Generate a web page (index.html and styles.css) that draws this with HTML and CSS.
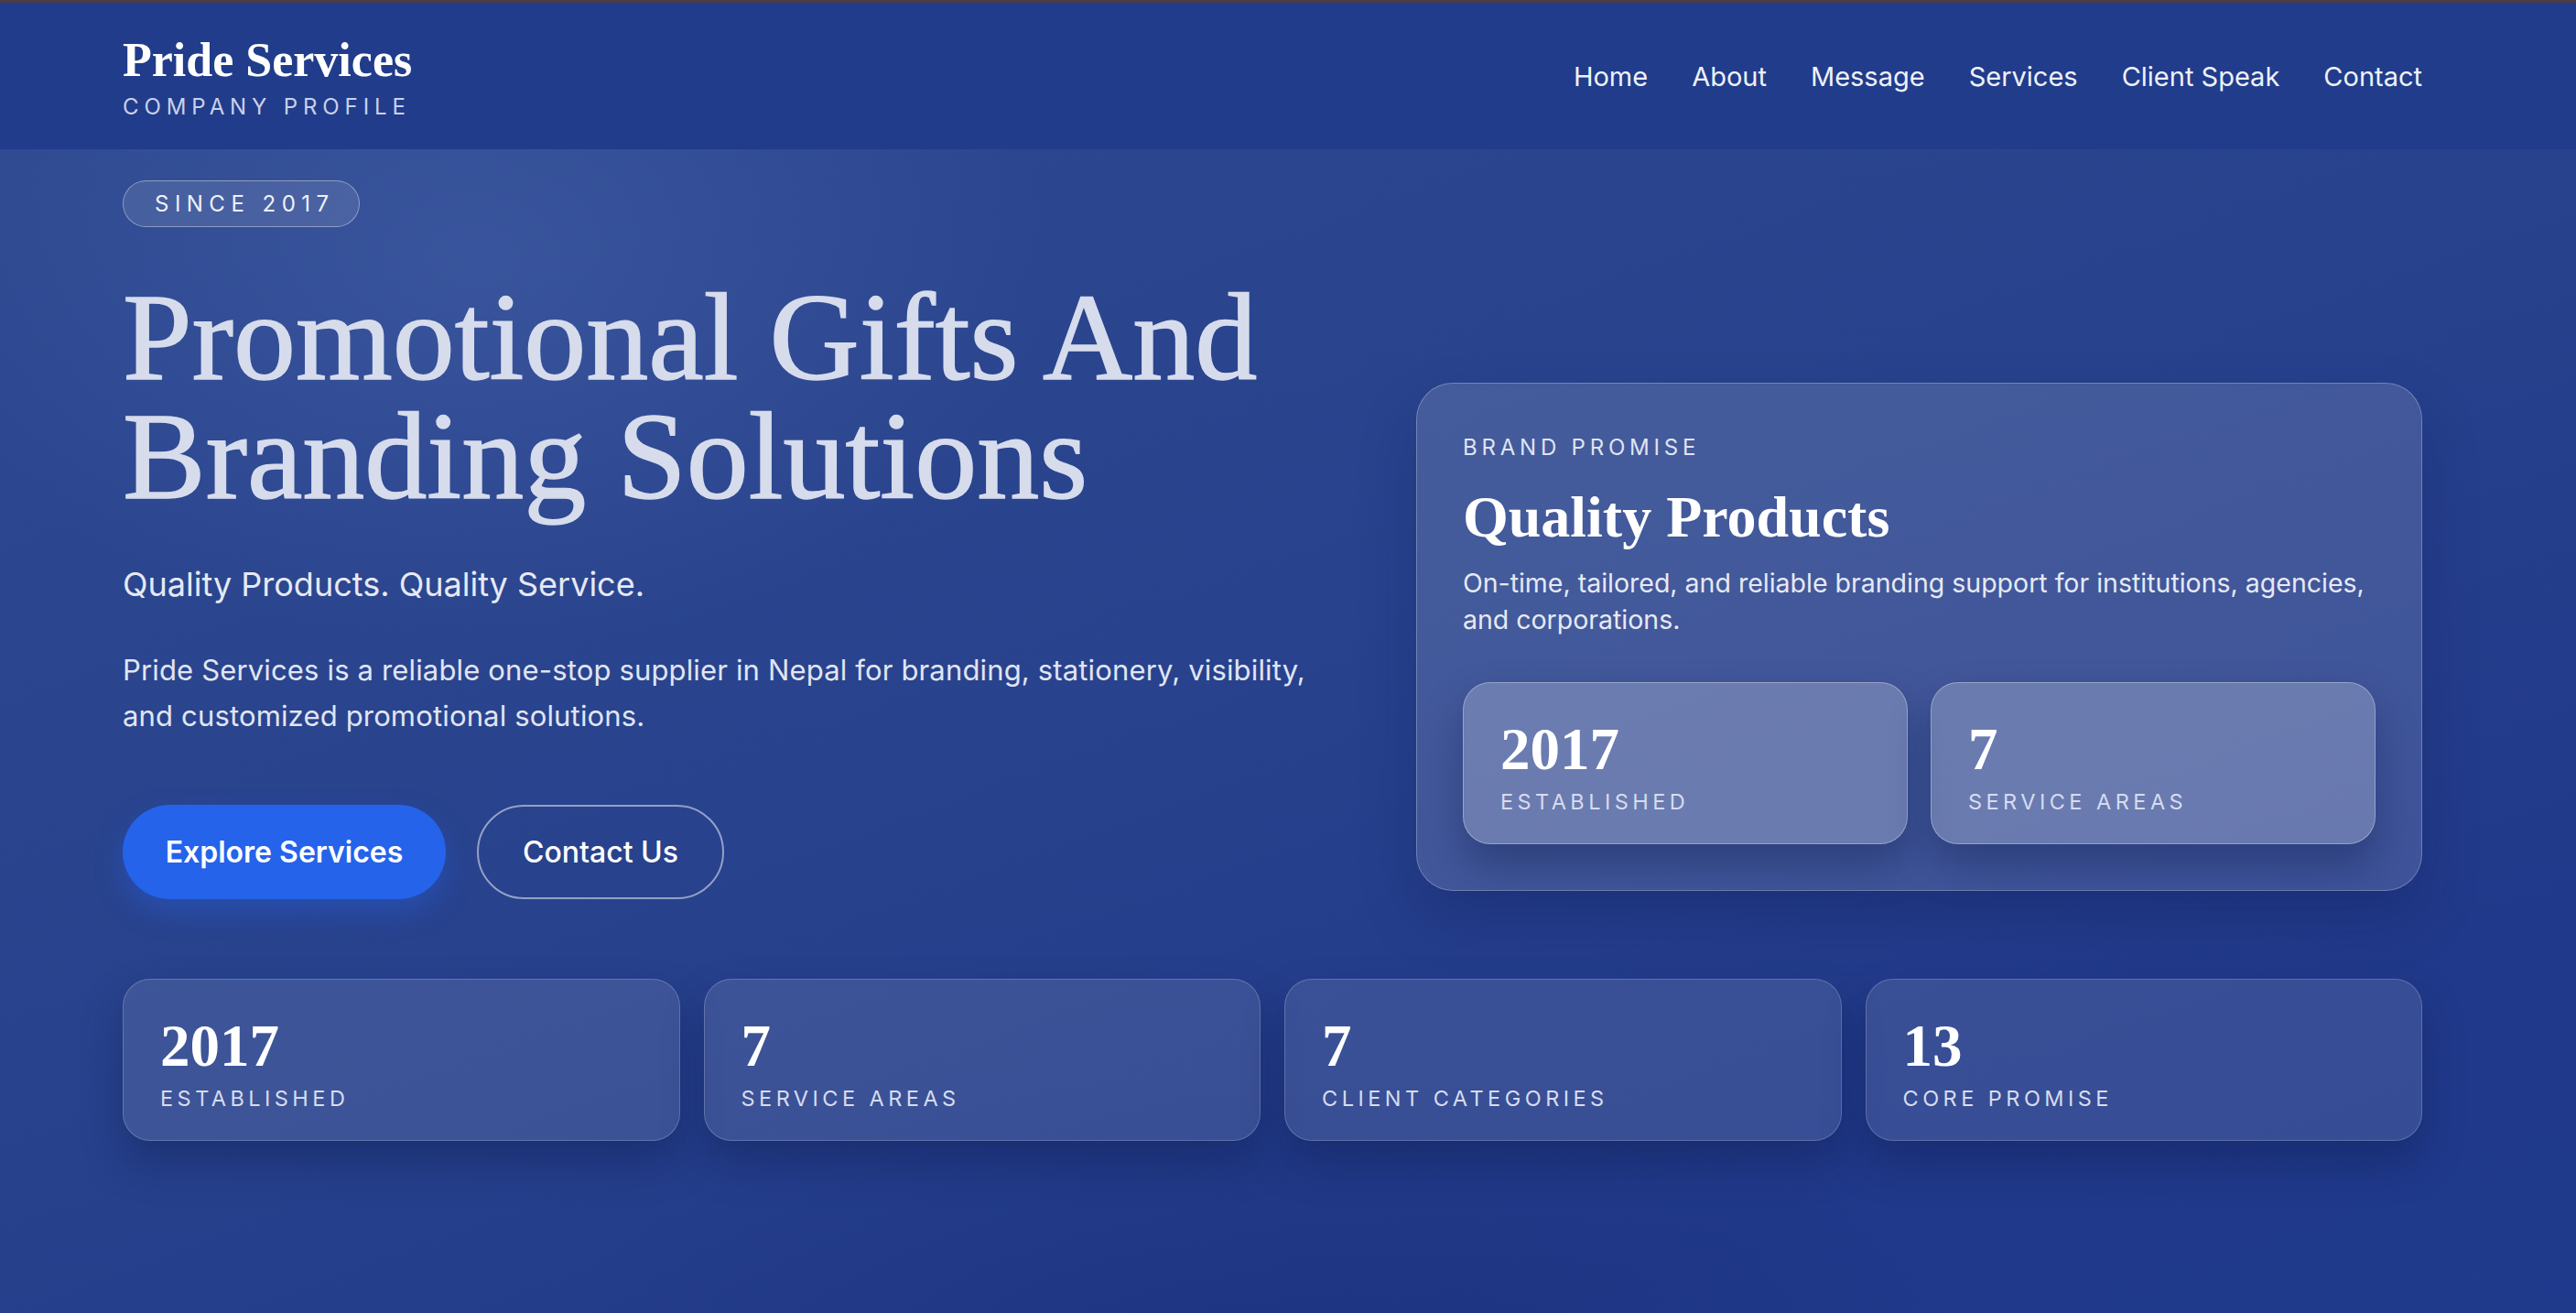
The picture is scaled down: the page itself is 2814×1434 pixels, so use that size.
FILE: index.html
```html
<!DOCTYPE html>
<html lang="en">
<head>
  <meta charset="UTF-8">
  <meta name="viewport" content="width=device-width, initial-scale=1">
  <title>Pride Services | Company Profile</title>
  <link rel="stylesheet" href="styles.css">
</head>
<body>
  <header class="site-header">
    <div class="container header-inner">
      <a class="brand" href="#">
        <span class="brand-name">Pride Services</span>
        <span class="brand-sub">Company Profile</span>
      </a>
      <nav class="nav">
        <a href="#">Home</a>
        <a href="#">About</a>
        <a href="#">Message</a>
        <a href="#">Services</a>
        <a href="#">Client Speak</a>
        <a href="#">Contact</a>
      </nav>
    </div>
  </header>

  <main class="hero">
    <div class="container">
      <div class="hero-grid">
        <div class="hero-copy">
          <span class="pill">Since 2017</span>
          <h1>Promotional Gifts And Branding Solutions</h1>
          <p class="tagline">Quality Products. Quality Service.</p>
          <p class="lead">Pride Services is a reliable one-stop supplier in Nepal for branding, stationery, visibility, and customized promotional solutions.</p>
          <div class="actions">
            <a class="btn btn-primary" href="#">Explore Services</a>
            <a class="btn btn-outline" href="#">Contact Us</a>
          </div>
        </div>

        <aside class="promise-card">
          <div class="eyebrow">Brand Promise</div>
          <h2>Quality Products</h2>
          <p>On-time, tailored, and reliable branding support for institutions, agencies, and corporations.</p>
          <div class="mini-grid">
            <div class="stat stat-light">
              <div class="stat-num">2017</div>
              <div class="stat-label">Established</div>
            </div>
            <div class="stat stat-light">
              <div class="stat-num">7</div>
              <div class="stat-label">Service Areas</div>
            </div>
          </div>
        </aside>
      </div>

      <!-- quick facts row -->
      <div class="stats-row">
        <div class="stat">
          <div class="stat-num">2017</div>
          <div class="stat-label">Established</div>
        </div>
        <div class="stat">
          <div class="stat-num">7</div>
          <div class="stat-label">Service Areas</div>
        </div>
        <div class="stat">
          <div class="stat-num">7</div>
          <div class="stat-label">Client Categories</div>
        </div>
        <div class="stat">
          <div class="stat-num">13</div>
          <div class="stat-label">Core Promise</div>
        </div>
      </div>
    </div>
  </main>
</body>
</html>
```

FILE: styles.css
```css
html, body {
  margin: 0;
  padding: 0;
  height: 100%;
}
body {
  font-family: "Inter", "Noto Sans", sans-serif;
  color: #fff;
  background: #213b88;
  border-top: 3px solid #4a3d47; /* thin top strip */
  box-sizing: border-box;
  overflow: hidden;
}
a {
  color: inherit;
  text-decoration: none;
}
.container {
  margin: 0 auto;
  padding: 0 168px 0 134px;
  box-sizing: border-box;
  width: 100%;
}

/* Header */
.site-header {
  background: #213c8b;
  height: 160px;
}
.header-inner {
  height: 100%;
  display: flex;
  align-items: center;
  justify-content: space-between;
}
.brand {
  display: flex;
  flex-direction: column;
  margin-top: 4px;
}
.brand-name {
  font-family: "Liberation Serif", serif;
  font-weight: 700;
  font-size: 52px;
  line-height: 52px;
}
.brand-sub {
  margin-top: 11px;
  font-size: 24px;
  line-height: 28px;
  letter-spacing: 0.245em;
  text-transform: uppercase;
  color: #c9d1ea;
}
.nav {
  display: flex;
  gap: 48px;
  font-size: 29px;
  color: #eef1f9;
}

/* Hero */
.hero {
  min-height: calc(100% - 160px);
  background:
    radial-gradient(ellipse 900px 600px at 520px 120px, rgba(90, 120, 190, 0.28), transparent 70%),
    radial-gradient(ellipse 1200px 500px at 1400px 1350px, rgba(20, 40, 110, 0.35), transparent 70%),
    linear-gradient(160deg, #2e4990 0%, #28428d 45%, #21398a 80%, #1f3a8c 100%);
  padding-top: 34px;
}
.hero-grid {
  display: grid;
  grid-template-columns: 1.22fr 1fr;
  gap: 72px;
  align-items: end;
}
.pill {
  display: inline-block;
  padding: 0 26px 0 34px;
  height: 49px;
  line-height: 49px;
  border: 1px solid rgba(255, 255, 255, 0.38);
  background: rgba(255, 255, 255, 0.1);
  border-radius: 30px;
  font-size: 24px;
  letter-spacing: 0.27em;
  text-transform: uppercase;
  color: #eef1f9;
}
.hero-copy h1 {
  font-family: "Liberation Serif", serif;
  font-weight: 400;
  font-size: 136px;
  line-height: 130px;
  color: #d7dcec;
  -webkit-text-stroke: 1.5px #d7dcec;
  margin: 55px 0 0 0;
}
.tagline {
  font-size: 36px;
  line-height: 44px;
  margin: 53px 0 0 0;
  color: #e6e9f4;
}
.lead {
  max-width: 1310px;
  font-size: 31px;
  line-height: 50px;
  letter-spacing: 0.005em;
  margin: 47px 0 0 0;
  color: #e1e5f2;
}
.actions {
  display: flex;
  gap: 34px;
  margin-top: 72px;
}
.btn {
  display: inline-flex;
  align-items: center;
  justify-content: center;
  height: 103px;
  border-radius: 52px;
  font-size: 32px;
  font-weight: 600;
  box-sizing: border-box;
}
.btn-primary {
  width: 353px;
  background: #2563eb;
  box-shadow: 0 14px 30px rgba(37, 99, 235, 0.35);
}
.btn-outline {
  width: 270px;
  border: 2px solid rgba(255, 255, 255, 0.5);
  font-weight: 500;
}

/* Brand promise card */
.promise-card {
  margin-bottom: 9px;
  padding: 56px 50px 50px 50px;
  border-radius: 40px;
  background: rgba(255, 255, 255, 0.13);
  border: 1.5px solid rgba(255, 255, 255, 0.25);
  box-shadow: 0 30px 60px rgba(10, 25, 80, 0.25);
}
.eyebrow {
  font-size: 24px;
  line-height: 28px;
  letter-spacing: 0.2em;
  text-transform: uppercase;
  color: #dfe4f3;
}
.promise-card h2 {
  font-family: "Liberation Serif", serif;
  font-weight: 700;
  font-size: 64px;
  line-height: 77px;
  margin: 23px 0 0 0;
}
.promise-card p {
  font-size: 28.5px;
  line-height: 40px;
  margin: 14px 0 0 0;
  color: #e6e9f4;
}
.mini-grid {
  display: grid;
  grid-template-columns: 1fr 1fr;
  gap: 25px;
  margin-top: 48px;
}

/* Stat tiles */
.stat {
  padding: 40px 40px 31px 40px;
  border-radius: 30px;
  background: rgba(255, 255, 255, 0.1);
  border: 1.5px solid rgba(255, 255, 255, 0.2);
  box-shadow: 0 24px 44px rgba(10, 22, 70, 0.35);
}
.stat-light {
  background: rgba(255, 255, 255, 0.22);
  border-color: rgba(255, 255, 255, 0.3);
}
.stat-num {
  font-family: "Liberation Serif", serif;
  font-weight: 700;
  font-size: 65px;
  line-height: 64px;
}
.stat-label {
  margin-top: 12px;
  font-size: 23.5px;
  line-height: 28px;
  letter-spacing: 0.19em;
  text-transform: uppercase;
  color: #d6dcef;
}
.stats-row {
  display: grid;
  grid-template-columns: repeat(4, 1fr);
  gap: 26px;
  margin-top: 87px;
}
```
